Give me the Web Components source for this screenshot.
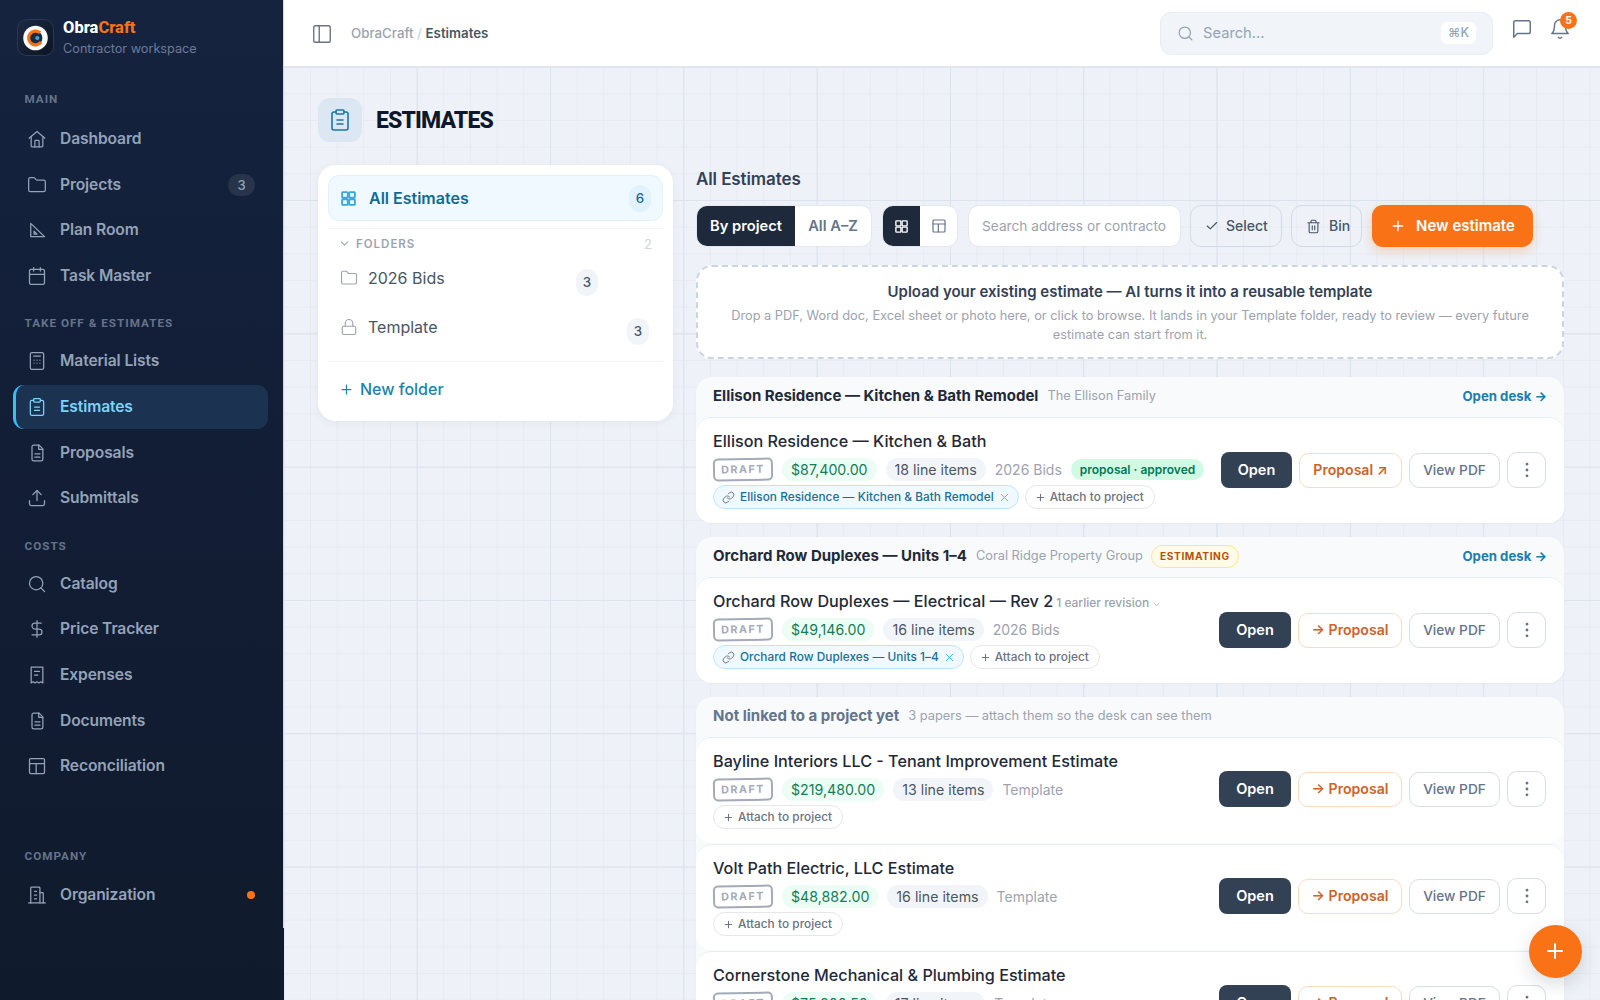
<!DOCTYPE html>
<html lang="en">
<head>
<meta charset="utf-8">
<title>ObraCraft Estimates</title>
<style>
html,body{margin:0;padding:0;height:1000px;overflow:hidden;background:#0f1a2c;font-family:Inter,"Noto Sans",sans-serif}
body{display:flex;-webkit-font-smoothing:antialiased}
</style>
</head>
<body>
<ob-sidebar>
  <ob-nav-label first>MAIN</ob-nav-label>
  <ob-nav-item icon="home">Dashboard</ob-nav-item>
  <ob-nav-item icon="folder" badge="3">Projects</ob-nav-item>
  <ob-nav-item icon="ruler">Plan Room</ob-nav-item>
  <ob-nav-item icon="calendar">Task Master</ob-nav-item>
  <ob-nav-label>TAKE OFF &amp; ESTIMATES</ob-nav-label>
  <ob-nav-item icon="calc">Material Lists</ob-nav-item>
  <ob-nav-item icon="clipboard" active>Estimates</ob-nav-item>
  <ob-nav-item icon="file">Proposals</ob-nav-item>
  <ob-nav-item icon="upload">Submittals</ob-nav-item>
  <ob-nav-label>COSTS</ob-nav-label>
  <ob-nav-item icon="search">Catalog</ob-nav-item>
  <ob-nav-item icon="dollar">Price Tracker</ob-nav-item>
  <ob-nav-item icon="receipt">Expenses</ob-nav-item>
  <ob-nav-item icon="file">Documents</ob-nav-item>
  <ob-nav-item icon="table">Reconciliation</ob-nav-item>
  <ob-nav-label far>COMPANY</ob-nav-label>
  <ob-nav-item icon="building" dot>Organization</ob-nav-item>
</ob-sidebar>
<ob-main>
  <ob-topbar slot="top"></ob-topbar>
  <ob-page-head>ESTIMATES</ob-page-head>
  <ob-columns>
    <ob-folder-panel slot="left"></ob-folder-panel>
    <h2 slot="heading" style="margin:0;font:600 17px/28px Inter,sans-serif;color:#334155;letter-spacing:-.1px">All Estimates</h2>
    <ob-toolbar slot="heading"></ob-toolbar>
    <ob-upload></ob-upload>
    <ob-group name="Ellison Residence — Kitchen &amp; Bath Remodel" sub="The Ellison Family" desk>
      <ob-card name="Ellison Residence — Kitchen &amp; Bath" amount="$87,400.00" items="18 line items" folder="2026 Bids" proposal="proposal · approved" link="Ellison Residence — Kitchen &amp; Bath Remodel" sent></ob-card>
    </ob-group>
    <ob-group name="Orchard Row Duplexes — Units 1–4" sub="Coral Ridge Property Group" status="ESTIMATING" desk>
      <ob-card name="Orchard Row Duplexes — Electrical — Rev 2" revision="1 earlier revision" amount="$49,146.00" items="16 line items" folder="2026 Bids" link="Orchard Row Duplexes — Units 1–4"></ob-card>
    </ob-group>
    <ob-group name="Not linked to a project yet" sub="3 papers — attach them so the desk can see them" muted>
      <ob-card name="Bayline Interiors LLC - Tenant Improvement Estimate" amount="$219,480.00" items="13 line items" folder="Template"></ob-card>
      <ob-card name="Volt Path Electric, LLC Estimate" amount="$48,882.00" items="16 line items" folder="Template"></ob-card>
      <ob-card name="Cornerstone Mechanical &amp; Plumbing Estimate" amount="$75,800.50" items="17 line items" folder="Template"></ob-card>
    </ob-group>
  </ob-columns>
  <ob-fab slot="over"></ob-fab>
</ob-main>

<script>
const ICONS={
home:'<path d="M2.500 11 12 3l9.500 8"/><path d="M5 9v11.500a1 1 0 0 0 1 1h12a1 1 0 0 0 1-1V9"/><path d="M9.500 21.500V14.500a1 1 0 0 1 1-1h3a1 1 0 0 1 1 1v7"/>',
folder:'<path d="M20 20a2 2 0 0 0 2-2V8a2 2 0 0 0-2-2h-7.900a2 2 0 0 1-1.690-.9L9.600 3.900A2 2 0 0 0 7.930 3H4a2 2 0 0 0-2 2v13a2 2 0 0 0 2 2Z"/>',
ruler:'<path d="M4.500 4V20H21Z"/><path d="M8.500 13.500V17h3.500Z"/>',
calendar:'<rect x="3" y="4" width="18" height="18" rx="2"/><path d="M16 2v4M8 2v4M3 10h18"/>',
calc:'<rect x="4" y="2" width="16" height="20" rx="2"/><path d="M8 6h8M8.500 11h.01M12 11h.01M15.500 11h.01M8.500 14.500h.01M12 14.500h.01M15.500 14.500h.01"/>',
clipboard:'<rect x="8" y="2" width="8" height="4" rx="1"/><path d="M16 4h2a2 2 0 0 1 2 2v14a2 2 0 0 1-2 2H6a2 2 0 0 1-2-2V6a2 2 0 0 1 2-2h2"/><path d="M9 12h6M9 16h6"/>',
file:'<path d="M14.500 2.500H8a2 2 0 0 0-2 2v15a2 2 0 0 0 2 2h9a2 2 0 0 0 2-2V7z"/><path d="M14 2.500V7.500h5"/><path d="M9.500 13h6M9.500 17h6"/>',
upload:'<path d="M21 15v4a2 2 0 0 1-2 2H5a2 2 0 0 1-2-2v-4"/><path d="m17 8-5-5-5 5"/><path d="M12 3v12"/>',
search:'<circle cx="11" cy="11" r="8"/><path d="m21 21-4.300-4.300"/>',
dollar:'<path d="M12 2v20"/><path d="M17 5H9.500a3.500 3.500 0 0 0 0 7h5a3.500 3.500 0 0 1 0 7H6"/>',
receipt:'<path d="M5 2.500h14v19l-2.300-1.500-2.300 1.500-2.400-1.500-2.400 1.500L7.300 20 5 21.500z"/><path d="M9 7.500h6M9 12h4"/>',
table:'<rect x="3" y="3" width="18" height="18" rx="1.500"/><path d="M3 9h18M11 9v12"/>',
building:'<path d="M2 21.500h20"/><path d="M4.500 21.500V3.500a1 1 0 0 1 1-1h9a1 1 0 0 1 1 1v18"/><path d="M15.500 9h3a1 1 0 0 1 1 1v11.500"/><path d="M9 7.500h2.500M9 12h2.500M9 16.500h2.500"/>',
panel:'<rect x="3" y="3" width="18" height="18" rx="2"/><path d="M9 3v18"/>',
chat:'<path d="M21 15a2 2 0 0 1-2 2H7l-4 4V5a2 2 0 0 1 2-2h14a2 2 0 0 1 2 2z"/>',
bell:'<path d="M6 8a6 6 0 0 1 12 0c0 7 3 9 3 9H3s3-2 3-9"/><path d="M10.300 21a1.940 1.940 0 0 0 3.400 0"/>',
grid:'<rect x="3" y="3" width="8" height="8" rx="1"/><rect x="13" y="3" width="8" height="8" rx="1"/><rect x="13" y="13" width="8" height="8" rx="1"/><rect x="3" y="13" width="8" height="8" rx="1"/>',
check:'<path d="M20 6 9 17l-5-5"/>',
trash:'<path d="M3 6h18M19 6v14a2 2 0 0 1-2 2H7a2 2 0 0 1-2-2V6M8 6V4a2 2 0 0 1 2-2h4a2 2 0 0 1 2 2v2M10 11v6M14 11v6"/>',
plus:'<path d="M5 12h14M12 5v14"/>',
lock:'<rect x="3" y="11" width="18" height="11" rx="2"/><path d="M7 11V7a5 5 0 0 1 10 0v4"/>',
chev:'<path d="m6 9 6 6 6-6"/>',
x:'<path d="M18 6 6 18M6 6l12 12"/>',
link:'<path d="M10 13a5 5 0 0 0 7.540.54l3-3a5 5 0 0 0-7.070-7.070l-1.720 1.710"/><path d="M14 11a5 5 0 0 0-7.540-.54l-3 3a5 5 0 0 0 7.070 7.070l1.710-1.710"/>',
dots:'<circle cx="12" cy="5" r=".8"/><circle cx="12" cy="12" r=".8"/><circle cx="12" cy="19" r=".8"/>'
};
const FONT='Inter,"Noto Sans",sans-serif', HEAD='Roboto,"Liberation Sans",sans-serif';
function esc(s){return String(s==null?'':s).replace(/&/g,'&amp;').replace(/</g,'&lt;').replace(/"/g,'&quot;')}
class Base extends HTMLElement{
  connectedCallback(){
    if(this.shadowRoot) return;
    this.attachShadow({mode:'open'}).innerHTML=this.render();
  }
  a(n){return this.getAttribute(n)}
  h(n){return this.hasAttribute(n)}
}
function def(n,fn){customElements.define(n,class extends Base{render(){return fn.call(this)}})}

def('ob-icon',function(){
  const s=this.a('size')||20, w=this.a('w')||1.8;
  return `<style>:host{display:inline-flex;flex:none;width:${s}px;height:${s}px}svg{display:block;width:100%;height:100%}</style>
  <svg viewBox="0 0 24 24" fill="none" stroke="currentColor" stroke-width="${w}" stroke-linecap="round" stroke-linejoin="round" aria-hidden="true">${ICONS[this.a('name')]||''}</svg>`;
});

def('ob-logo',function(){
  return `<style>:host{display:block;width:37px;height:37px;flex:none}svg{display:block}</style>
  <svg width="37" height="37" viewBox="0 0 37 37" aria-hidden="true">
    <defs><linearGradient id="g" x1="0" y1="0" x2="1" y2="1"><stop offset="0" stop-color="#1c2a44"/><stop offset="1" stop-color="#0c1422"/></linearGradient></defs>
    <rect x=".5" y=".5" width="36" height="36" rx="9" fill="url(#g)" stroke="#2a3852"/>
    <circle cx="18.500" cy="19" r="12.300" fill="#f8fafc"/>
    <circle cx="18.500" cy="19" r="6.900" fill="#1e2a3f"/>
    <circle cx="18.500" cy="19" r="6.900" fill="none" stroke="#f97316" stroke-width="3.200" stroke-dasharray="33 10.400" transform="rotate(36 18.500 19)"/>
    <circle cx="20.300" cy="19" r="2.100" fill="#38a8d8"/>
  </svg>`;
});

def('ob-sidebar',function(){
  return `<style>
  :host{display:block;position:relative;flex:none;width:284px;height:1000px;box-sizing:border-box;padding:19px 16px 0 13px;background:linear-gradient(180deg,#15233f 0,#131f38 340px,#0f1a2c 100%);font-family:${FONT}}
  :host::after{content:"";position:absolute;top:0;right:0;width:1.400px;height:928px;background:#cfd9e6}
  .brand{display:flex;gap:9px;align-items:center;margin-left:4px;height:37px}
  .t{font:800 16.500px/20px ${HEAD};color:#fff;letter-spacing:0}
  .t b{color:#f97316;font-weight:800}
  .s{font:400 12.700px/18px ${FONT};color:#6b7b95;margin-top:2px}
  </style>
  <div class="brand"><ob-logo></ob-logo><div><div class="t">Obra<b>Craft</b></div><div class="s">Contractor workspace</div></div></div>
  <slot></slot>`;
});

def('ob-nav-label',function(){
  const m=this.h('first')?35:this.h('far')?60.200:17.600;
  const b=this.h('far')?9:this.h('first')?10:8;
  return `<style>:host{display:block;margin:${m}px 0 ${b}px 11.500px;font:700 11.700px/16px ${HEAD};letter-spacing:1px;color:#64748b}</style><slot></slot>`;
});

def('ob-nav-item',function(){
  const act=this.h('active');
  return `<style>
  :host{display:flex;align-items:center;box-sizing:border-box;height:44px;margin-bottom:1.600px;padding:0 13px 0 11px;border-left:3px solid ${act?'#38bdf8':'transparent'};border-radius:11px;background:${act?'#1b3350':'transparent'};color:${act?'#7dd3fc':'#94a3b8'};font:600 15.600px/20px ${FONT};letter-spacing:-.1px}
  .l{margin-left:13px;flex:1}
  .b{width:27px;height:22px;border-radius:11px;background:#273449;color:#94a3b8;font:500 13px/22px ${FONT};text-align:center}
  .d{width:8px;height:8px;border-radius:50%;background:#f97316}
  </style>
  <ob-icon name="${this.a('icon')}" size="20" w="1.500"></ob-icon><span class="l"><slot></slot></span>
  ${this.a('badge')?`<span class="b">${this.a('badge')}</span>`:''}${this.h('dot')?'<span class="d"></span>':''}`;
});

def('ob-main',function(){
  return `<style>
  :host{display:block;position:relative;flex:1;min-width:0;height:1000px;overflow:hidden;background-color:#eef2f8}
  .scroll{height:933px;overflow:hidden;box-sizing:border-box;padding:31px 36px 0 34px;
   background-color:#eef2f8;
   background-image:linear-gradient(90deg,#dbe3ee 1.330px,transparent 1.330px),linear-gradient(180deg,#dbe3ee 1.330px,transparent 1.330px),linear-gradient(90deg,#e6ebf3 1.330px,transparent 1.330px),linear-gradient(180deg,#e6ebf3 1.330px,transparent 1.330px);
   background-size:133.330px 133.330px,133.330px 133.330px,26.667px 26.667px,26.667px 26.667px;
   background-position:-.67px -.33px,-.67px -.33px,-.67px -.33px,-.67px -.33px}
  </style>
  <slot name="top"></slot><div class="scroll"><slot></slot></div><slot name="over"></slot>`;
});

def('ob-topbar',function(){
  return `<style>
  :host{display:flex;align-items:center;box-sizing:border-box;height:67px;background:#fff;border-bottom:1.330px solid #dfe5ee;padding:0 0 0 27px;font-family:${FONT}}
  .p{color:#6b7280;display:flex;margin-top:1px}
  .c{margin-left:18px;font:500 13.300px/20px ${FONT};color:#9ca3af;flex:1;margin-top:-1px}
  .c b{font-weight:600;color:#4b5563}
  .c i{font-style:normal;color:#cbd5e1}
  .s{display:flex;align-items:center;box-sizing:border-box;width:333px;height:43px;background:#f1f5f9;border:1.330px solid #e8edf4;border-radius:11px;padding:0 16px 0 16px;margin-right:18px;color:#94a3b8}
  .s span{flex:1;margin-left:9px;font:400 14.700px/20px ${FONT}}
  kbd{display:block;width:35px;height:22px;background:#fff;border-radius:6px;font:500 12.500px/22px ${FONT};text-align:center;color:#94a3b8}
  .i{display:flex;color:#64748b}
  .bell{position:relative;margin:0 29px 0 16px}
  .n{position:absolute;top:-6px;right:-6px;width:17px;height:17px;border-radius:50%;background:#f97316;color:#fff;font:700 10.500px/17px ${FONT};text-align:center}
  </style>
  <span class="p"><ob-icon name="panel" size="22" w="1.500"></ob-icon></span>
  <div class="c">ObraCraft <i>/</i> <b>Estimates</b></div>
  <div class="s"><ob-icon name="search" size="17"></ob-icon><span>Search...</span><kbd>⌘K</kbd></div>
  <span class="i" style="margin-top:-8px"><ob-icon name="chat" size="22" w="1.600"></ob-icon></span>
  <span class="i bell" style="margin-top:-8px"><ob-icon name="bell" size="22" w="1.600"></ob-icon><span class="n">5</span></span>`;
});

def('ob-page-head',function(){
  return `<style>
  :host{display:flex;align-items:center;gap:14px;height:44px;margin-bottom:23px}
  .b{width:44px;height:44px;border-radius:12px;background:#dbe7f3;color:#1d75a8;display:flex;align-items:center;justify-content:center}
  .t{font:800 23px/44px ${HEAD};color:#0f172a;letter-spacing:-.85px;margin-top:2px}
  </style><span class="b"><ob-icon name="clipboard" size="24" w="1.600"></ob-icon></span><span class="t"><slot></slot></span>`;
});

def('ob-columns',function(){
  return `<style>
  :host{display:grid;grid-template-columns:355px 868px;column-gap:23px;align-items:start}
  .r{display:flex;flex-direction:column}
  .h{display:flex;flex-direction:column;gap:0}
  </style><slot name="left"></slot><div class="r"><div class="h"><slot name="heading"></slot></div><slot></slot></div>`;
});

def('ob-count',function(){
  return `<style>:host{display:inline-block;width:22px;height:27px;border-radius:11px;background:${this.h('blue')?'#e0f2fe':'#f1f5f9'};color:${this.h('blue')?'#0c6a94':'#4b5563'};font:500 13.300px/27px ${FONT};text-align:center}</style><slot></slot>`;
});

def('ob-folder-panel',function(){
  return `<style>
  :host{display:block;box-sizing:border-box;height:256px;background:#fff;border-radius:18px;box-shadow:0 2px 10px rgba(15,23,42,.05);padding:10px 10px 0;font-family:${FONT}}
  .all{display:flex;align-items:center;height:46px;box-sizing:border-box;background:#f0f9ff;border:1.330px solid #e0f2fe;border-radius:11px;padding:0 11px 0 11px;color:#0e6b96;font:600 16px/20px ${FONT}}
  .all .g{color:#38a8dc;display:flex;margin-right:12px}
  .all .l{flex:1}
  hr{border:0;border-top:1.330px solid #f1f4f8;margin:0}
  .f{display:flex;align-items:center;height:24px;margin:2.700px 0 0;padding:0 11px 0 10px;color:#9ca3af;font:600 11.500px/16px ${FONT};letter-spacing:1px}
  .f span{flex:1;margin-left:5px}
  .f em{font:400 13px/16px ${FONT};color:#d1d5db;letter-spacing:0;font-style:normal}
  .row{position:relative;display:flex;align-items:flex-start;padding-left:12px;color:#4b5563;font:400 16px/20px ${FONT}}
  .row .ic{color:#9ca3af;display:flex;margin-right:10px}
  .row .l{display:flex;align-items:center}
  .nf{display:flex;align-items:center;margin-top:15.700px;padding-left:11px;color:#1a84ad;font:500 16px/24px ${FONT}}
  .nf ob-icon{margin-right:6px}
  </style>
  <div class="all"><span class="g"><ob-icon name="grid" size="17" w="2.600"></ob-icon></span><span class="l">All Estimates</span><ob-count blue>6</ob-count></div>
  <hr style="margin-top:7px">
  <div class="f"><ob-icon name="chev" size="13" w="2"></ob-icon><span>FOLDERS</span><em>2</em></div>
  <div class="row" style="height:49px"><span class="l" style="margin-top:12.100px"><span class="ic"><ob-icon name="folder" size="18" w="1.500"></ob-icon></span>2026 Bids</span><ob-count style="left:248px;top:13.500px;position:absolute">3</ob-count></div>
  <div class="row" style="height:56px"><span class="l" style="margin-top:12px"><span class="ic"><ob-icon name="lock" size="18" w="1.500"></ob-icon></span>Template</span><ob-count style="left:299px;top:13px;position:absolute">3</ob-count></div>
  <hr style="margin:0">
  <div class="nf"><ob-icon name="plus" size="15" w="2"></ob-icon>New folder</div>`;
});

def('ob-toolbar',function(){
  return `<style>
  :host{display:flex;align-items:stretch;height:42px;margin-top:12px;gap:10px;font-family:${FONT}}
  .seg{display:flex;border:1.330px solid #e2e8f0;border-radius:11px;overflow:hidden;background:#fff;box-sizing:border-box}
  .seg span{display:flex;align-items:center;justify-content:center;color:#64748b;font:600 14.700px/20px ${FONT}}
  .seg .on{background:#1e293b;color:#fff}
  .inp{box-sizing:border-box;width:213px;background:#fff;border:1.330px solid #e2e8f0;border-radius:11px;padding:0 13px;display:flex;align-items:center;white-space:nowrap;color:#9ca3af;font:400 13.700px/20px ${FONT}}
  .g{box-sizing:border-box;display:flex;align-items:center;gap:8px;border:1.330px solid #d3dbe6;border-radius:11px;color:#475569;font:500 14px/20px ${FONT};padding-left:14px}
  .new{box-sizing:border-box;display:flex;align-items:center;gap:10.500px;padding-left:17.500px;width:161px;background:#f97316;border-radius:11px;color:#fff;font:600 15px/20px ${FONT};box-shadow:0 4px 12px rgba(249,115,22,.28)}
  </style>
  <div class="seg" style="width:176px"><span class="on" style="width:98px">By project</span><span style="flex:1">All A–Z</span></div>
  <div class="seg" style="width:76px"><span class="on" style="width:37px"><ob-icon name="grid" size="15" w="2.200"></ob-icon></span><span style="flex:1"><ob-icon name="table" size="16" w="1.800"></ob-icon></span></div>
  <div class="inp">Search address or contracto</div>
  <div class="g" style="width:92px;margin-left:-1px;gap:7px"><ob-icon name="check" size="14" w="2"></ob-icon>Select</div>
  <div class="g" style="width:71px;margin-left:-1px"><ob-icon name="trash" size="15" w="1.800"></ob-icon>Bin</div>
  <div class="new"><ob-icon name="plus" size="16" w="2"></ob-icon>New estimate</div>`;
});

def('ob-upload',function(){
  return `<style>
  :host{display:block;box-sizing:border-box;height:94px;margin:18px 0 18px;background:#fff;border:2px dashed #cbd5e1;border-radius:16px;padding:14px 30px 0;text-align:center;font-family:${FONT}}
  .t{font:600 15px/22px ${FONT};color:#334155}
  .s{font:400 12.800px/19px ${FONT};color:#9ca3af;margin-top:3px}
  </style>
  <div class="t">Upload your existing estimate — AI turns it into a reusable template</div>
  <div class="s">Drop a PDF, Word doc, Excel sheet or photo here, or click to browse. It lands in your Template folder, ready to review — every future estimate can start from it.</div>`;
});

def('ob-group',function(){
  return `<style>
  :host{display:block;background:#f8fafc;border-radius:16px;margin-bottom:14px;box-shadow:0 1px 3px rgba(15,23,42,.03);font-family:${FONT}}
  .h{display:flex;align-items:center;height:40px;padding:0 17px 2px 17px;box-sizing:border-box}
  .n{font:700 15px/20px ${FONT};color:${this.h('muted')?'#64748b':'#1f2937'}}
  .s{margin-left:9px;font:400 12.800px/20px ${FONT};color:#9ca3af}
  .st{margin-left:8px;height:23px;box-sizing:border-box;border:1.330px solid #fde68a;background:#fffbeb;border-radius:12px;padding:0 8px;color:#b45309;font:700 10.200px/20px ${FONT};letter-spacing:.6px}
  .d{margin-left:auto;font:700 13.200px/20px ${FONT};color:#1a7fae}
  .c{display:flex;flex-direction:column;gap:1px}
  </style>
  <div class="h"><span class="n">${esc(this.a('name'))}</span><span class="s">${esc(this.a('sub'))}</span>
  ${this.a('status')?`<span class="st">${esc(this.a('status'))}</span>`:''}
  ${this.h('desk')?'<span class="d">Open desk →</span>':''}</div>
  <div class="c"><slot></slot></div>`;
});

def('ob-card',function(){
  const sent=this.h('sent');
  const pr=this.a('proposal'), ln=this.a('link'), rev=this.a('revision');
  return `<style>
  :host{display:flex;align-items:center;box-sizing:border-box;height:106px;background:#fff;border-radius:16px;border-top:1.330px solid #e8edf3;padding:0 18px 0 17px;font-family:${FONT}}
  .m{flex:1;min-width:0}
  .t{display:flex;align-items:baseline;font:500 16.200px/26px ${FONT};color:#1f2937;margin-top:-4px}
  .rev{margin-left:3px;font:500 12px/16px ${FONT};color:#9ca3af}
  .r1{display:flex;align-items:center;gap:9px;margin-top:3px;height:25px}
  .dr{box-sizing:border-box;width:60px;height:23px;border:2px solid #a3abb8;border-radius:5px;color:#a3abb8;font:700 10.700px/19px ${FONT};letter-spacing:1.500px;text-align:center;transform:rotate(-1deg)}
  .am,.li{height:23px;border-radius:12px;padding:0 9px;font:400 14.200px/23px ${FONT}}
  .am{background:#ecfdf5;color:#137d55}
  .li{background:#f1f5f9;color:#4b5563}
  .fo{font:400 14px/23px ${FONT};color:#9ca3af}
  .pr{height:21px;border-radius:11px;background:#d1fae5;color:#047857;font:600 12px/21px ${FONT};padding:0 9px}
  .r2{display:flex;align-items:center;gap:6px;margin:3px 0 0 0;height:24px}
  .ch{box-sizing:border-box;display:flex;align-items:center;height:24px;border-radius:12px;border:1.330px solid #e5e7eb;background:#fff;color:#6b7280;font:500 11.800px/20px ${FONT};padding:0 10px 0 9px;letter-spacing:.05px}
  .ch.li2{background:#f0f9ff;border-color:#bae6fd;color:#1a6f96;padding:0 7px 0 8px}
  .ch .lk{color:#6b7280;display:flex;margin-right:5px}
  .ch .xx{color:#38bdf8;display:flex;margin-left:4px}
  .ch .pl{display:flex;margin-right:4px;color:#6b7280}
  .a{display:flex;align-items:center;gap:7px;flex:none;margin-bottom:${ln?1:3}px}
  .b{box-sizing:border-box;display:flex;align-items:center;justify-content:center;height:35px;border-radius:10px;font:500 13.700px/20px ${FONT};border:1.330px solid #d8dde6;color:#64748b}
  .o{width:${sent?71:72}px;height:36px;background:#334155;border:0;color:#fff;border-radius:8px;font-weight:600;font-size:14.500px}
  .p{width:${sent?103:104}px;border-color:#fbdcc0;color:#cf6228;font-weight:600;font-size:14.100px}
  .v{width:91px}
  .me{width:39px;height:36px}
  </style>
  <div class="m">
    <div class="t">${esc(this.a('name'))}${rev?`<span class="rev">${esc(rev)}&nbsp;<ob-icon name="chev" size="9" w="2" style="vertical-align:-2px"></ob-icon></span>`:''}</div>
    <div class="r1"><span class="dr">DRAFT</span><span class="am">${esc(this.a('amount'))}</span><span class="li">${esc(this.a('items'))}</span><span class="fo">${esc(this.a('folder'))}</span>${pr?`<span class="pr">${esc(pr)}</span>`:''}</div>
    <div class="r2">${ln?`<span class="ch li2"><span class="lk"><ob-icon name="link" size="13"></ob-icon></span>${esc(ln)}<span class="xx"><ob-icon name="x" size="13"></ob-icon></span></span>`:''}<span class="ch"><span class="pl"><ob-icon name="plus" size="11" w="2.200"></ob-icon></span>Attach to project</span></div>
  </div>
  <div class="a"><span class="b o">Open</span><span class="b p">${sent?'Proposal ↗':'→ Proposal'}</span><span class="b v">View PDF</span><span class="b me"><ob-icon name="dots" size="20" w="1.800"></ob-icon></span></div>`;
});

def('ob-fab',function(){
  return `<style>:host{position:absolute;right:18.500px;bottom:22.500px;width:53px;height:53px;border-radius:50%;background:#f97316;color:#fff;display:flex;align-items:center;justify-content:center;box-shadow:0 6px 18px rgba(15,23,42,.16)}</style><ob-icon name="plus" size="24" w="2"></ob-icon>`;
});
</script>
</body>
</html>
